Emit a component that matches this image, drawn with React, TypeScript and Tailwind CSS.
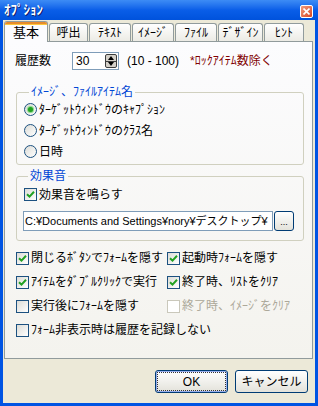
import type { ReactNode } from 'react'

function Check({ checked = false, disabled = false }: { checked?: boolean; disabled?: boolean }) {
  return (
    <span
      className={
        disabled
          ? 'flex h-[13px] w-[13px] shrink-0 items-center justify-center border border-[#cac8bb] bg-white'
          : 'flex h-[13px] w-[13px] shrink-0 items-center justify-center border border-[#1c5180] bg-gradient-to-br from-[#dcdcd7] to-white'
      }
    >
      {checked && (
        <svg width="9" height="9" viewBox="0 0 9 9">
          <path d="M1 4.2 L3.5 6.6 L8 1.8" stroke="#21a121" strokeWidth="2" fill="none" />
        </svg>
      )}
    </span>
  )
}

function Radio({ checked = false }: { checked?: boolean }) {
  return (
    <span className="flex h-[13px] w-[13px] shrink-0 items-center justify-center rounded-full border border-[#1c5180] bg-gradient-to-br from-[#dcdcd7] to-white">
      {checked && <span className="h-[5px] w-[5px] rounded-full bg-[#21a121] shadow-[0_0_1px_1px_#7fd67f]" />}
    </span>
  )
}

function Tab({ label, width, active = false }: { label: string; width: string; active?: boolean }) {
  if (active) {
    return (
      <div
        className={`${width} relative z-10 -mb-px flex h-[21px] flex-col rounded-t-[3px] border border-b-0 border-[#919b9c] bg-[#fcfcfe]`}
      >
        <div className="h-[2px] rounded-t-[2px] bg-[#e68b2c]" />
        <div className="h-[1px] bg-[#ffc73c]" />
        <div className="flex flex-1 items-center justify-center pb-[2px] text-[13px] leading-[14px]">{label}</div>
      </div>
    )
  }
  return (
    <div
      className={`${width} flex h-[18px] items-center justify-center rounded-t-[3px] border border-b-0 border-[#919b9c] bg-gradient-to-b from-white to-[#ecebe5] text-[12px] leading-[14px]`}
    >
      {label}
    </div>
  )
}

function Group({ title, children, className }: { title: string; children: ReactNode; className: string }) {
  return (
    <fieldset className={`${className} min-w-0 rounded-[3px] border border-[#d0d0bf]`}>
      <legend className="ml-[5px] px-[2px] text-[12px] leading-[14px] text-[#0046d5]">{title}</legend>
      {children}
    </fieldset>
  )
}

function CheckRow({ label, checked, disabled }: { label: string; checked?: boolean; disabled?: boolean }) {
  return (
    <div className="flex h-[24px] items-center gap-[2px]">
      <Check checked={checked} disabled={disabled} />
      <span className={disabled ? 'text-[12px] text-[#aca899]' : 'text-[12px]'}>{label}</span>
    </div>
  )
}

export default function App() {
  return (
    <div className="flex h-[406px] w-[318px] flex-col overflow-hidden bg-[#0054e3] font-['Liberation_Sans','Noto_Sans_CJK_JP',sans-serif] text-black">
      {/* title bar */}
      <div className="flex h-[20px] items-center justify-between bg-gradient-to-b from-[#3d8cf5] via-[#0a5ee8] to-[#0052dc] pl-[4px] pr-[5px]">
        <span className="text-[13px] font-bold leading-[14px] text-white [text-shadow:1px_1px_#0a1e6e]">ｵﾌﾟｼｮﾝ</span>
        <span className="mt-[2px] flex h-[13px] w-[13px] items-center justify-center rounded-[2px] border border-white bg-gradient-to-br from-[#f09a7c] to-[#d8431e]">
          <svg width="7" height="7" viewBox="0 0 7 7">
            <path d="M0.5 0.5 L6.5 6.5 M6.5 0.5 L0.5 6.5" stroke="white" strokeWidth="1.6" />
          </svg>
        </span>
      </div>

      {/* dialog body */}
      <div className="mx-[3px] mb-[3px] flex flex-1 flex-col bg-[#ece9d8] pl-[1px] pr-[2px] pt-[1px]">
        <div className="flex items-end gap-[1px]">
          <Tab label="基本" width="w-[44px]" active />
          <Tab label="呼出" width="w-[39px]" />
          <Tab label="ﾃｷｽﾄ" width="w-[42px]" />
          <Tab label="ｲﾒｰｼﾞ" width="w-[42px]" />
          <Tab label="ﾌｧｲﾙ" width="w-[42px]" />
          <Tab label="ﾃﾞｻﾞｲﾝ" width="w-[45px]" />
          <Tab label="ﾋﾝﾄ" width="w-[40px]" />
        </div>

        <div className="flex h-[318px] flex-col border border-[#919b9c] bg-gradient-to-b from-[#fcfcfe] to-[#f4f3ee]">
          {/* history count */}
          <div className="mt-[10px] flex h-[18px] items-center pl-[10px] text-[12px]">
            <span className="w-[57px]">履歴数</span>
            <div className="flex h-[18px] w-[47px] items-center justify-between border border-[#7f9db9] bg-white pl-[3px] pr-[1px]">
              <span>30</span>
              <div className="flex h-[14px] w-[12px] flex-col overflow-hidden rounded-[2px] border border-[#3c3c3c] bg-[#d4d0c8]">
                <div className="flex flex-1 items-center justify-center border-b border-[#3c3c3c]">
                  <svg width="6" height="4" viewBox="0 0 6 4">
                    <path d="M0 4 L3 0 L6 4 Z" fill="#000" />
                  </svg>
                </div>
                <div className="flex flex-1 items-center justify-center">
                  <svg width="6" height="4" viewBox="0 0 6 4">
                    <path d="M0 0 L3 4 L6 0 Z" fill="#000" />
                  </svg>
                </div>
              </div>
            </div>
            <span className="ml-[8px] w-[63px]">(10 - 100)</span>
            <span className="text-[#800000]">*ﾛｯｸｱｲﾃﾑ数除く</span>
          </div>

          {/* item name group */}
          <Group title="ｲﾒｰｼﾞ、ﾌｧｲﾙｱｲﾃﾑ名" className="ml-[11px] mr-[8px] mt-[15px] pb-[2px] pl-[7px]">
            <div className="flex h-[21px] items-center gap-[2px] text-[12px]">
              <Radio checked />
              <span>ﾀｰｹﾞｯﾄｳｨﾝﾄﾞｳのｷｬﾌﾟｼｮﾝ</span>
            </div>
            <div className="flex h-[21px] items-center gap-[2px] text-[12px]">
              <Radio />
              <span>ﾀｰｹﾞｯﾄｳｨﾝﾄﾞｳのｸﾗｽ名</span>
            </div>
            <div className="flex h-[21px] items-center gap-[2px] text-[12px]">
              <Radio />
              <span>日時</span>
            </div>
          </Group>

          {/* sound group */}
          <Group title="効果音" className="ml-[11px] mr-[8px] mt-[4px] pb-[9px] pl-[6px] pr-[9px]">
            <div className="flex h-[21px] items-center gap-[2px] pl-[1px] pt-[2px] text-[12px]">
              <Check checked />
              <span>効果音を鳴らす</span>
            </div>
            <div className="mt-[7px] flex h-[20px] items-stretch gap-[1px]">
              <div className="flex min-w-0 flex-1 items-center overflow-hidden whitespace-nowrap border border-[#7f9db9] bg-white pl-[1px] text-[11px]">
                C:¥Documents and Settings¥nory¥デスクトップ¥
              </div>
              <div className="flex w-[20px] shrink-0 items-end justify-center rounded-[3px] border border-[#003c74] bg-gradient-to-b from-white to-[#e3e2da] pb-[3px] text-[9px] leading-[9px]">
                ...
              </div>
            </div>
          </Group>

          {/* options */}
          <div className="ml-[11px] mt-[5px] grid grid-cols-[151px_1fr]">
            <CheckRow label="閉じるﾎﾞﾀﾝでﾌｫｰﾑを隠す" checked />
            <CheckRow label="起動時ﾌｫｰﾑを隠す" checked />
            <CheckRow label="ｱｲﾃﾑをﾀﾞﾌﾞﾙｸﾘｯｸで実行" checked />
            <CheckRow label="終了時、ﾘｽﾄをｸﾘｱ" checked />
            <CheckRow label="実行後にﾌｫｰﾑを隠す" />
            <CheckRow label="終了時、ｲﾒｰｼﾞをｸﾘｱ" disabled />
            <div className="col-span-2">
              <CheckRow label="ﾌｫｰﾑ非表示時は履歴を記録しない" />
            </div>
          </div>
        </div>

        {/* buttons */}
        <div className="mt-[11px] flex justify-end gap-[7px] pr-[5px]">
          <button className="h-[23px] w-[73px] rounded-[3px] border border-[#003c74] bg-gradient-to-b from-white to-[#e3e2da] p-[1px] shadow-[inset_0_0_0_1px_#97aeee]">
            <span className="flex h-full w-full items-center justify-center border border-dotted border-[#333] text-[12px]">
              OK
            </span>
          </button>
          <button className="flex h-[23px] w-[73px] items-center justify-center rounded-[3px] border border-[#003c74] bg-gradient-to-b from-white to-[#e3e2da] text-[12px]">
            キャンセル
          </button>
        </div>
      </div>
    </div>
  )
}
